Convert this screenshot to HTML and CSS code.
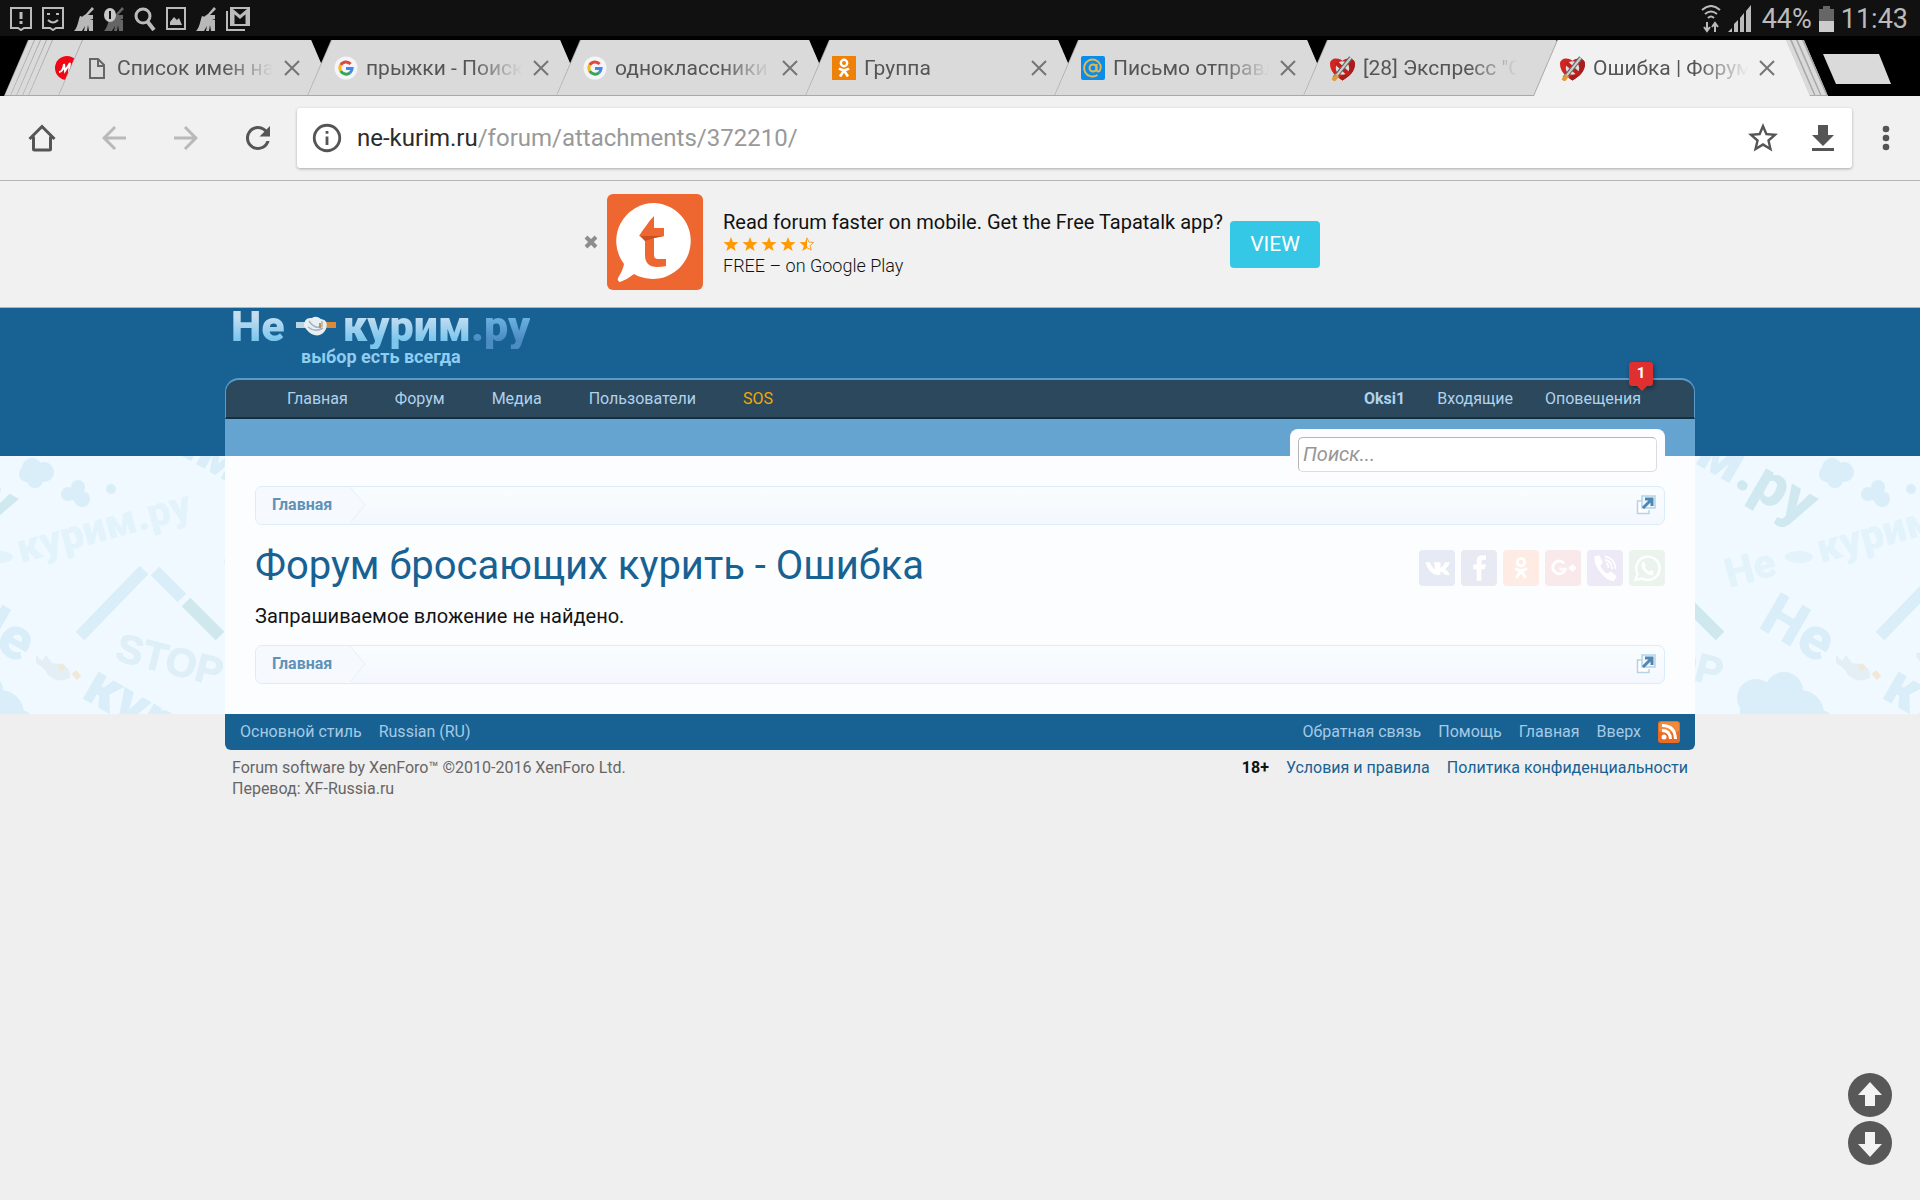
FILE: index.html
```html
<!DOCTYPE html>
<html lang="ru">
<head>
<meta charset="utf-8">
<meta name="viewport" content="width=device-width, initial-scale=1">
<title>Ошибка | Форум бросающих курить</title>
<link rel="stylesheet" href="styles.css">
</head>
<body>
<svg class="sprite" aria-hidden="true">
  <symbol id="i-close" viewBox="0 0 16 16"><path d="M1 1l14 14M15 1L1 15" fill="none" stroke="currentColor" stroke-width="2"/></symbol>
  <symbol id="i-google" viewBox="0 0 24 24"><circle cx="12" cy="12" r="11.5" fill="#f4f5f8"/><g fill="none" stroke-width="3"><path d="M16.6 8A6.1 6.1 0 0 0 6.7 9" stroke="#e0483b"/><path d="M6.7 9a6.1 6.1 0 0 0 0 6" stroke="#f5bb1b"/><path d="M6.7 15a6.1 6.1 0 0 0 9.4 1.6" stroke="#36a556"/><path d="M16.1 16.600a6.100 6.100 0 0 0 2-4.100H12" stroke="#4684ef"/></g></symbol>
  <symbol id="i-heart" viewBox="0 0 24 24"><path d="M12 24C5 20 0 15 0 8c0-5 7-7 12-3 5-4 12-2 12 3 0 7-5 12-12 16z" fill="#d32424"/><path d="M12 24c7-4 12-9 12-16 0-2-1-3.500-2.500-4.500L9 22z" fill="#a91d1d"/><circle cx="12" cy="12" r="6.500" fill="#e4dcdc"/><path d="M6 7l12 11" stroke="#c02020" stroke-width="4"/><path d="M4 22L20 2" stroke="#666" stroke-width="4"/><path d="M5 21L20 2" stroke="#cfcfcf" stroke-width="2"/><path d="M3 24l4-5" stroke="#e59a35" stroke-width="4"/></symbol>
  <symbol id="i-broom" viewBox="0 0 20 24"><path d="M18 0l2 2-6 6h5v4H7l2-3 3-2z" fill="#b8b8b8"/><path d="M6 9l13 4v11h-4l-1-6-1 6h-3l1-5-3 5H0c4-4 4-10 6-15z" fill="#b8b8b8"/></symbol>
  <symbol id="i-ok" viewBox="0 0 24 24"><circle cx="12" cy="7" r="3.200" fill="none" stroke="currentColor" stroke-width="2.400"/><path d="M7 12.500q5 3.500 10 0M12 14.500l-4 6M12 14.500l4 6" fill="none" stroke="currentColor" stroke-width="2.600"/></symbol>
  <symbol id="i-star" viewBox="0 0 18 18"><path d="M9 1l2.100 5.800 6.400.2-5 3.900L14.200 17 9 13.500 3.800 17l1.700-6.100L.5 7l6.400-.2z" fill="#f90"/></symbol>
  <symbol id="i-toggle" viewBox="0 0 20 20"><path d="M6 6H1.500v12.500H13V15" fill="#fff" stroke="#b5d3e6" stroke-width="1.500"/><path d="M6 1h13v12H6z" fill="#eef7ff" stroke="#b5d3e6" stroke-width="1.500"/><path d="M7 13l8-8M9 4h7v7" fill="none" stroke="#4f87b2" stroke-width="3"/></symbol>
</svg>

<div class="statusbar">
  <div class="status-icons">
    <svg width="22" height="24" viewBox="0 0 22 24"><path d="M1 1h20v20h-7l-3 2-3-2H1z" fill="none" stroke="#bbb" stroke-width="2"/><path d="M11 5v7M11 14v3" stroke="#bbb" stroke-width="3"/></svg>
    <svg width="22" height="24" viewBox="0 0 22 24"><path d="M1 1h20v20h-7l-3 2-3-2H1z" fill="none" stroke="#bbb" stroke-width="2"/><path d="M5 7h3M14 7h3M6 13q5 5 10 0" fill="none" stroke="#bbb" stroke-width="2"/></svg>
    <svg width="20" height="24"><use href="#i-broom"/></svg>
    <svg width="20" height="24" viewBox="0 0 20 24"><g opacity=".5"><use href="#i-broom" width="20" height="24"/></g><ellipse cx="6" cy="8" rx="6" ry="7" fill="#c8c8c8"/><path d="M6 4v8" stroke="#111" stroke-width="2"/></svg>
    <svg width="22" height="24" viewBox="0 0 22 24"><circle cx="9" cy="9" r="7" fill="none" stroke="#bbb" stroke-width="3"/><path d="M13 14l7 9" stroke="#bbb" stroke-width="4"/></svg>
    <svg width="20" height="24" viewBox="0 0 20 24"><path d="M1 1h18v21H1z" fill="none" stroke="#bbb" stroke-width="2"/><path d="M4 18v-3l4-5 3 3 2-2 3 7z" fill="#bbb"/></svg>
    <svg width="20" height="24"><use href="#i-broom"/></svg>
    <svg width="24" height="24" viewBox="0 0 24 24"><path d="M5 1h18v17H5zM1 4v19h18" fill="none" stroke="#bbb" stroke-width="2"/><path d="M7 18V4l7 6 7-6v14" fill="none" stroke="#bbb" stroke-width="3"/></svg>
  </div>
  <div class="status-right">
    <svg width="20" height="28" viewBox="0 0 20 28"><path d="M1 5q9-8 18 0M4 9q6-5 12 0M7 13q3-3 6 0" fill="none" stroke="#bbb" stroke-width="2"/><path d="M6 17v8M3 22l3 4 3-4M14 27v-8M11 22l3-4 3 4" fill="none" stroke="#bbb" stroke-width="2"/></svg>
    <svg width="23" height="28" viewBox="0 0 23 28"><path d="M0 27l4-4v4zM6 27v-8l4-4v12zM12 27V13l4-5v19zM18 27V6l5-6v27z" fill="#bbb"/></svg>
    <span class="battery-level">44%</span>
    <svg width="15" height="28" viewBox="0 0 15 28"><path d="M0 4h4V1h7v3h4v12H0z" fill="#666"/><path d="M0 16h15v11H0z" fill="#ccc"/></svg>
    <span>11:43</span>
  </div>
</div>

<div class="tabstrip">
  <div class="tab tab-stacked"></div>
  <div class="tab tab-stacked"></div>
  <div class="tab tab-stacked"></div>
  <div class="tab tab-stacked"></div>
  <div class="tab tab-peek"><svg width="24" height="24" viewBox="0 0 24 24"><circle cx="12" cy="12" r="12" fill="#f00614"/><path d="M4 16q4 0 5-8l1 7 5-8-1 9q3 0 4-2" fill="none" stroke="#fff" stroke-width="2"/></svg></div>
  <div class="tab"><svg width="24" height="24" viewBox="0 0 24 24"><path d="M5 3h8l6 6v13H5zM13 3v7h6" fill="none" stroke="#666" stroke-width="2"/></svg><span class="tab-title">Список имен на</span><button class="tab-close" aria-label="Закрыть"><svg width="16" height="16"><use href="#i-close"/></svg></button></div>
  <div class="tab"><svg width="24" height="24"><use href="#i-google"/></svg><span class="tab-title">прыжки - Поиск</span><button class="tab-close" aria-label="Закрыть"><svg width="16" height="16"><use href="#i-close"/></svg></button></div>
  <div class="tab"><svg width="24" height="24"><use href="#i-google"/></svg><span class="tab-title">одноклассники</span><button class="tab-close" aria-label="Закрыть"><svg width="16" height="16"><use href="#i-close"/></svg></button></div>
  <div class="tab"><svg class="fav-ok" width="24" height="24"><use href="#i-ok"/></svg><span class="tab-title">Группа</span><button class="tab-close" aria-label="Закрыть"><svg width="16" height="16"><use href="#i-close"/></svg></button></div>
  <div class="tab"><svg width="24" height="24" viewBox="0 0 24 24"><rect width="24" height="24" rx="2" fill="#0b8ce8"/><circle cx="12" cy="12" r="3.500" fill="none" stroke="#e5b84f" stroke-width="2"/><path d="M15.500 8v6q1 2.500 3 1 2-3 1-6a8.500 8.500 0 1 0-3 10" fill="none" stroke="#e5b84f" stroke-width="2"/></svg><span class="tab-title">Письмо отправл</span><button class="tab-close" aria-label="Закрыть"><svg width="16" height="16"><use href="#i-close"/></svg></button></div>
  <div class="tab tab-covered"><svg width="25" height="26"><use href="#i-heart"/></svg><span class="tab-title">[28] Экспресс "С</span></div>
  <div class="tab tab-active"><svg width="25" height="26"><use href="#i-heart"/></svg><span class="tab-title">Ошибка | Форум</span><button class="tab-close" aria-label="Закрыть"><svg width="16" height="16"><use href="#i-close"/></svg></button></div>
  <div class="edge edge-a"></div>
  <div class="edge edge-b"></div>
  <div class="edge edge-c"></div>
  <button class="new-tab" aria-label="Новая вкладка"></button>
</div>

<div class="toolbar">
  <button class="tool" aria-label="Домой"><svg width="36" height="36" viewBox="0 0 36 36"><path d="M5.500 19L18 6.500 30.500 19M9.500 16.500V29q0 1 1 1h15q1 0 1-1V16.500" fill="none" stroke="#555" stroke-width="3"/></svg></button>
  <button class="tool tool-off" aria-label="Назад"><svg width="36" height="36" viewBox="0 0 24 24"><path d="M20 11H7.800l5.600-5.600L12 4l-8 8 8 8 1.400-1.400L7.800 13H20z" fill="currentColor"/></svg></button>
  <button class="tool tool-off" aria-label="Вперед"><svg width="36" height="36" viewBox="0 0 24 24"><path d="M12 4l-1.400 1.400 5.600 5.600H4v2h12.200l-5.600 5.600L12 20l8-8z" fill="currentColor"/></svg></button>
  <button class="tool" aria-label="Обновить"><svg width="36" height="36" viewBox="0 0 24 24"><path d="M17.650 6.350A8 8 0 1 0 19.730 14h-2.080A6 6 0 1 1 12 6c1.660 0 3.140.69 4.220 1.780L13 11h7V4z" fill="currentColor"/></svg></button>
  <div class="omnibox">
    <svg width="34" height="34" viewBox="0 0 24 24"><path d="M11 17h2v-6h-2v6zm1-15a10 10 0 1 0 0 20 10 10 0 0 0 0-20zm0 18a8 8 0 1 1 0-16 8 8 0 0 1 0 16zM11 9h2V7h-2v2z" fill="#555"/></svg>
    <p class="url"><span class="host">ne-kurim.ru</span>/forum/attachments/372210/</p>
    <button class="tool" aria-label="Добавить в закладки"><svg width="36" height="36" viewBox="0 0 24 24"><path d="M22 9.240l-7.190-.62L12 2 9.190 8.630 2 9.240l5.460 4.730L5.820 21 12 17.270 18.180 21l-1.630-7.030L22 9.240zM12 15.400l-3.760 2.270 1-4.280-3.320-2.880 4.380-.38L12 6.100l1.710 4.040 4.380.38-3.320 2.880 1 4.280L12 15.400z" fill="currentColor"/></svg></button>
    <button class="tool" aria-label="Скачать"><svg width="36" height="36" viewBox="0 0 36 36"><path d="M13 5h10v10h6L18 26 7 15h6zM7 28h22v3H7z" fill="currentColor"/></svg></button>
  </div>
  <button class="menu" aria-label="Меню"><svg width="8" height="28" viewBox="0 0 8 28"><g fill="#555"><circle cx="4" cy="5" r="3.300"/><circle cx="4" cy="14" r="3.300"/><circle cx="4" cy="23" r="3.300"/></g></svg></button>
</div>

<div class="promo">
  <button class="promo-close" aria-label="Закрыть"><svg width="14" height="14" viewBox="0 0 14 14"><path d="M2 2l10 10M12 2L2 12" stroke="#8d8d8d" stroke-width="4"/></svg></button>
  <svg class="promo-logo" width="96" height="96" viewBox="0 0 96 96"><rect width="96" height="96" rx="6" fill="#ee6730"/><path d="M48 9a38 38 0 1 1-21 71q-6 5-14 8-3-1-2-4 5-8 6-14A38 38 0 0 1 48 9z" fill="#fff"/><path d="M47 22v12h10v8l-10 2v17q0 4 4 4h8v7q-4 1-9 1-12 0-12-12V43l-6-1q3-5 7-10 4-6 8-10z" fill="#ee6730"/><path d="M33 42h24l-10 2-9 3z" fill="#c94f1e"/></svg>
  <div class="promo-text">
    <p class="promo-title">Read forum faster on mobile. Get the Free Tapatalk app?</p>
    <div class="stars" role="img" aria-label="4.5"><svg width="16" height="16"><use href="#i-star"/></svg><svg width="16" height="16"><use href="#i-star"/></svg><svg width="16" height="16"><use href="#i-star"/></svg><svg width="16" height="16"><use href="#i-star"/></svg><svg width="16" height="16" viewBox="0 0 18 18"><path d="M9 1v12.500L3.800 17l1.700-6.100L.5 7l6.400-.2z" fill="#f90"/><path d="M9 2l2.100 4.800 5.400.4-4 3.700 1.200 5L9 13" fill="none" stroke="#f90"/></svg></div>
    <p class="promo-note">FREE – on Google Play</p>
  </div>
  <button class="promo-view">VIEW</button>
</div>

<header class="header">
  <div class="wrap">
    <a class="logo" href="#">
      <span class="logo-row"><span class="logo-main">Не</span><svg width="40" height="24" viewBox="0 0 40 24"><path d="M0 11h12" stroke="#bcd5e3" stroke-width="6"/><path d="M28 11h12" stroke="#d98a3c" stroke-width="6"/><path d="M8 12q0-9 8-8 4-3 9 1 8 1 5 10-4 8-12 6-6-2-10-9z" fill="#e9eef0"/><path d="M13 7q6 9 13 5V7M12 13q7 6 15 1" fill="none" stroke="#9fb6c2" stroke-width="1.500"/><path d="M24 9v5" stroke="#d98a3c" stroke-width="2"/></svg><span class="logo-main">курим</span><span class="logo-zone">.ру</span></span>
      <span class="logo-sub">выбор есть всегда</span>
    </a>
    <nav class="nav">
      <a href="#">Главная</a><a href="#">Форум</a><a href="#">Медиа</a><a href="#">Пользователи</a><a class="sos" href="#">SOS</a>
      <div class="nav-user">
        <a class="user" href="#">Oksi1</a><a href="#">Входящие</a><a class="alerts" href="#">Оповещения<span class="badge">1</span></a>
      </div>
    </nav>
    <div class="subnav">
      <form class="search"><input type="text" placeholder="Поиск..." aria-label="Поиск"></form>
    </div>
  </div>
</header>

<main class="main">
  <svg class="wallpaper" aria-hidden="true">
    <defs>
      <g id="slogan"><g transform="translate(257 171) rotate(30)"><text class="wp-big">Не</text></g><g transform="translate(380 241) rotate(30)"><text class="wp-big">курим<tspan fill="#d0e8f0">.ру</tspan></text></g><path d="M336 199l6 6 4-6 6 8 8 1q12 4 10 14-12 6-22-3-4-8-12-12z" fill="#e3eff4"/><path d="M360 209l4 4M374 216l5 6" stroke="#f3e8d8" stroke-width="6"/></g>
      <g id="slogan-small" fill="#e3f3fb"><text class="wp-small" transform="translate(229 132) rotate(-15)">Не</text><text class="wp-small" transform="translate(321 107) rotate(-15)">курим.ру</text><ellipse cx="299" cy="101" rx="14" ry="6"/></g>
      <g id="cloud"><circle cx="256" cy="242" r="19"/><circle cx="284" cy="235" r="19"/><circle cx="300" cy="258" r="24"/><circle cx="320" cy="268" r="14"/><rect x="240" y="244" width="70" height="30"/></g>
      <pattern id="tile" width="300" height="300" patternUnits="userSpaceOnUse">
        <rect width="300" height="300" fill="#f0f9ff"/>
        <g fill="#d9eef8"><use href="#cloud"/><use href="#cloud" x="-300"/>
        <circle cx="32" cy="12" r="10"/><circle cx="44" cy="16" r="10"/><circle cx="27" cy="18" r="8"/><circle cx="35" cy="24" r="8"/>
        <circle cx="78" cy="31" r="7"/><circle cx="68" cy="38" r="7"/><circle cx="82" cy="43" r="8"/><circle cx="76" cy="38" r="7"/><circle cx="111" cy="33" r="5"/></g>
        <use href="#slogan-small"/><use href="#slogan-small" x="-300"/>
        <g stroke-width="12"><path d="M80 180l64-66M155 115l27 27" stroke="#d9eef8"/><path d="M186 146l34 34" stroke="#cfe8ee"/></g>
        <text class="wp-stop" transform="translate(114 204) rotate(14)">STOP</text>
        <g fill="#d9eef8"><use href="#slogan"/><use href="#slogan" x="-300"/><use href="#slogan" x="-300" y="-300"/><use href="#slogan" x="-600" y="-300"/></g>
      </pattern>
    </defs>
    <rect width="100%" height="100%" fill="url(#tile)"/>
  </svg>
  <div class="wrap content">
    <nav class="crumbs"><a href="#">Главная</a><svg class="chevron" width="16" height="36" viewBox="0 0 16 36"><path d="M0 0l15 18L0 36z" fill="#f6f9fe"/><path d="M0 0l15 18L0 36" fill="none" stroke="#e3f0fa"/></svg><button class="crumb-toggle" aria-label="Открыть меню"><svg width="20" height="20"><use href="#i-toggle"/></svg></button></nav>
    <div class="title-row">
      <h1>Форум бросающих курить - Ошибка</h1>
      <div class="share">
        <button class="vk" aria-label="ВКонтакте"><svg width="28" height="28" viewBox="0 0 24 24"><path d="M2 7h4q2 5 4 6V9L9 7h6v5q2-1 4-5h4q-1 4-4 6 3 2 4 5h-4q-2-3-4-3v3h-3Q5 17 2 7z" fill="#fff"/></svg></button>
        <button class="fb" aria-label="Facebook"><svg width="28" height="28" viewBox="0 0 24 24"><path d="M10 23V13H7V9h3V6q0-5 5-5h3v4h-2q-2 0-2 2v2h4l-1 4h-3v10z" fill="#fff"/></svg></button>
        <button class="ok" aria-label="Одноклассники"><svg width="28" height="28"><use href="#i-ok"/></svg></button>
        <button class="gp" aria-label="Google+"><svg width="28" height="28" viewBox="0 0 24 24"><path d="M13 8a5.500 5.500 0 1 0 1 5H9M17 12h6M20 9v6" fill="none" stroke="#fff" stroke-width="2.400"/></svg></button>
        <button class="vb" aria-label="Viber"><svg width="28" height="28" viewBox="0 0 24 24"><path d="M3 2l4-1 3 6-2 3q2 5 6 7l3-2 5 4-2 4q-5 1-11-6Q2 9 3 2z" fill="#fff"/><path d="M12 2q9 2 9 11M12 5q6 1 6 8M13 8q2 1 2 4" fill="none" stroke="#fff" stroke-width="1.500"/></svg></button>
        <button class="wa" aria-label="WhatsApp"><svg width="28" height="28" viewBox="0 0 24 24"><path d="M2 22l2-5a10 10 0 1 1 4 4z" fill="none" stroke="#fff" stroke-width="2"/><path d="M8 7l2 0 1 3-1 1q1 3 4 4l1-1 3 1-1 3q-3 1-7-3-4-4-2-8z" fill="#fff"/></svg></button>
      </div>
    </div>
    <p class="message">Запрашиваемое вложение не найдено.</p>
    <nav class="crumbs"><a href="#">Главная</a><svg class="chevron" width="16" height="36" viewBox="0 0 16 36"><path d="M0 0l15 18L0 36z" fill="#f6f9fe"/><path d="M0 0l15 18L0 36" fill="none" stroke="#e3f0fa"/></svg><button class="crumb-toggle" aria-label="Открыть меню"><svg width="20" height="20"><use href="#i-toggle"/></svg></button></nav>
  </div>
</main>

<footer class="wrap">
  <div class="footer-bar">
    <div class="footer-links"><a href="#">Основной стиль</a><a href="#">Russian (RU)</a></div>
    <div class="footer-links"><a href="#">Обратная связь</a><a href="#">Помощь</a><a href="#">Главная</a><a href="#">Вверх</a>
    <a class="rss" href="#" aria-label="RSS"><svg width="22" height="22" viewBox="0 0 22 22"><rect width="22" height="22" rx="3" fill="#ea6c24"/><rect x="1" y="1" width="20" height="10" rx="2" fill="#f08a3c"/><circle cx="6" cy="16" r="2.500" fill="#fff"/><path d="M4 9.500q8 0 8.500 8.500M4 4.500q13 0 13.500 13.500" fill="none" stroke="#fff" stroke-width="3"/></svg></a></div>
  </div>
  <div class="legal">
    <p>Forum software by XenForo™ ©2010-2016 XenForo Ltd.<br>Перевод: XF-Russia.ru</p>
    <div class="legal-links"><b>18+</b><a href="#">Условия и правила</a><a href="#">Политика конфиденциальности</a></div>
  </div>
</footer>

<div class="scrollers">
  <button aria-label="Вверх"><svg width="44" height="44" viewBox="0 0 44 44"><circle cx="22" cy="22" r="22" fill="#585858"/><path d="M22 9l12 13h-7v11H17V22h-7z" fill="#f3f3f3"/></svg></button>
  <button aria-label="Вниз"><svg width="44" height="44" viewBox="0 0 44 44"><circle cx="22" cy="22" r="22" fill="#585858"/><path d="M22 36L10 23h7V11h10v12h7z" fill="#f3f3f3"/></svg></button>
</div>
</body>
</html>
```
FILE: styles.css
```css
* { box-sizing: border-box; }
body {
  margin: 0;
  background: #efefef;
  color: #141414;
  font: 16px/20px Roboto, "Liberation Sans", sans-serif;
}
p, h1 { margin: 0; }
a { color: inherit; text-decoration: none; }
svg { display: block; flex: none; }
button { padding: 0; border: 0; background: none; color: inherit; font: inherit; }
.sprite { position: absolute; width: 0; height: 0; }

.statusbar {
  display: flex;
  justify-content: space-between;
  align-items: center;
  height: 36px;
  padding: 2px 12px 0 10px;
  background: #111;
  color: #bbb;
  font-size: 27px;
}
.status-icons { display: flex; gap: 10px; }
.status-right { display: flex; align-items: center; gap: 7px; }
.battery-level { padding-left: 4px; }

.tabstrip {
  display: flex;
  isolation: isolate;
  height: 60px;
  padding: 4px 0 0 4px;
  background: #000;
}
.tab {
  position: relative;
  display: flex;
  flex: 0 1 277px;
  align-items: center;
  gap: 8px;
  min-width: 0;
  height: 56px;
  margin-right: -28px;
  padding: 0 35px 0 27px;
  background: #a9a9a9;
  clip-path: polygon(24px 0, calc(100% - 24px) 0, 100% 100%, 0 100%);
  color: #555;
  font-size: 21px;
}
.tab::before {
  content: "";
  position: absolute;
  inset: 0 0 1px 0;
  background: #dadada;
  clip-path: polygon(25px 0, 100% 0, 100% 100%, 1px 100%);
}
.tab > * { position: relative; }
.tab-stacked { flex: 0 0 60px; margin-right: -54px; padding: 0; }
.tab-peek { flex: 0 0 90px; margin-right: -60px; padding-right: 0; }
.tab-covered { margin-right: -47px; }
.tab-active { z-index: 2; margin-right: 0; }
.tab-active::before { bottom: 0; background: #f1f1f1; }
.tab-title {
  flex: 1;
  overflow: hidden;
  white-space: nowrap;
  line-height: 28px;
  mask-image: linear-gradient(to right, #000 calc(100% - 50px), transparent);
}
.tab-covered .tab-title { margin-right: 27px; }
.tab-close { margin-left: 3px; color: #757575; }
.fav-ok { background: #ee8208; color: #fff; }
.edge {
  position: relative;
  flex: none;
  width: 40px;
  height: 56px;
  margin-left: -34px;
  background: #dadada;
  border-bottom: 1px solid #a9a9a9;
  clip-path: polygon(0 0, 16px 0, 100% 100%, 0 100%);
}
.edge::after {
  content: "";
  position: absolute;
  inset: 0;
  background: #a9a9a9;
  clip-path: polygon(14px 0, 16px 0, 100% 100%, calc(100% - 2px) 100%);
}
.edge-a { z-index: 1; }
.edge-b { z-index: 0; }
.edge-c { z-index: -1; }
.new-tab {
  width: 68px;
  height: 30px;
  margin: 14px 0 0 -5px;
  background: #dadada;
  clip-path: polygon(0 0, 56px 0, 100% 100%, 13px 100%);
}

.toolbar {
  display: flex;
  align-items: center;
  gap: 36px;
  height: 85px;
  padding: 0 30px 0 24px;
  border-bottom: 1px solid #b5b5b5;
  background: #f1f1f1;
}
.tool { color: #555; }
.tool-off { color: #b9b9b9; }
.omnibox {
  display: flex;
  flex: 1;
  align-items: center;
  gap: 24px;
  height: 60px;
  margin-left: -15px;
  margin-right: -6px;
  padding: 0 11px 0 13px;
  border-radius: 3px;
  background: #fff;
  box-shadow: 0 1px 3px rgba(0, 0, 0, .3);
}
.url { flex: 1; margin-left: -11px; color: #999; font-size: 24px; line-height: 32px; }
.host { color: #2b2b2b; }

.promo {
  display: flex;
  justify-content: center;
  align-items: center;
  height: 126px;
  padding: 0 16px 4px 0;
  background: #f1f1f1;
  color: #111;
}
.promo-logo { margin: 0 20px 0 9px; }
.promo-text { display: grid; gap: 2px; margin-right: 7px; padding-top: 4px; }
.promo-title { font-size: 20px; line-height: 24px; }
.stars { display: flex; gap: 3px; }
.promo-note { font-size: 18px; line-height: 24px; font-weight: 300; }
.promo-view {
  width: 90px;
  height: 47px;
  margin-top: 4px;
  border-radius: 4px;
  background: #34c8e6;
  color: #fff;
  font-size: 21px;
}

.wrap { max-width: 1470px; margin: 0 auto; }
.header { background: #186193; border-top: 1px solid #8fbddb; }
.logo { display: flow-root; height: 70px; padding-left: 6px; }
.logo-row { display: flex; align-items: center; height: 46px; margin-top: -5px; font-size: 43px; font-weight: 900; }
.logo-row svg { margin: 0 7px 0 11px; }
.logo-main, .logo-zone {
  line-height: 46px;
  background: linear-gradient(#c4def0 30%, #7cc6ee 80%);
  background-clip: text;
  color: transparent;
}
.logo-zone { background-image: linear-gradient(#6bb4e2 30%, #4b8cc4 80%); }
.logo-sub { display: block; padding-left: 70px; color: #8fcdf0; font-size: 18px; line-height: 16px; font-weight: 700; }
.nav {
  display: flex;
  align-items: center;
  gap: 47px;
  height: 41px;
  padding: 0 53px 0 61px;
  border: 2px solid #5b9bcb;
  border-color: #5b9bcb #5b9bcb #12303f;
  border-width: 2px 1px 2px 1px;
  border-radius: 14px 14px 0 0;
  background: #2b485c;
  color: #b0d2ec;
}
.nav .sos { color: #f5a800; }
.nav-user { display: flex; gap: 32px; margin-left: auto; }
.user { font-weight: 700; }
.alerts { position: relative; }
.badge {
  position: absolute;
  right: -12px;
  bottom: 23px;
  width: 24px;
  height: 24px;
  border-radius: 3px;
  background: #e02f2f;
  box-shadow: 1px 2px 4px rgba(0, 0, 0, .4);
  color: #fff;
  font-size: 15px;
  line-height: 22px;
  font-weight: 700;
  text-align: center;
}
.badge::after {
  content: "";
  position: absolute;
  left: 8px;
  top: 24px;
  border: 5px solid transparent;
  border-top-color: #e02f2f;
  border-bottom: 0;
}
.subnav { position: relative; height: 37px; background: #65a3d1; }
.search {
  position: absolute;
  z-index: 2;
  right: 30px;
  top: 10px;
  width: 375px;
  padding: 8px;
  border-radius: 8px 8px 0 0;
  background: #fdfdff;
}
.search input {
  display: block;
  width: 100%;
  height: 35px;
  padding: 0 4px 2px;
  border: 1px solid #dcdcdc;
  border-color: #b5b5b5 #dcdcdc #dcdcdc #b5b5b5;
  border-radius: 5px;
  background: #fff;
  font: italic 20px/24px Roboto, "Liberation Sans", sans-serif;
}
.search input::placeholder { color: #969696; opacity: 1; }

.main { position: relative; }
.wallpaper { position: absolute; inset: 0; width: 100%; height: 100%; }
.wp-big { font: 900 59px Roboto, sans-serif; }
.wp-small { font: 900 41px Roboto, sans-serif; }
.wp-stop { font: 700 40px "Liberation Sans", sans-serif; fill: #deeff8; stroke: #deeff8; stroke-width: 1px; }
.content { position: relative; padding: 30px; background: #fcfdff; }
.crumbs {
  display: flex;
  height: 39px;
  overflow: hidden;
  border: 1px solid #dcecf8;
  border-radius: 7px;
  background: linear-gradient(#fafdfe, #f4f8fe);
}
.crumbs a {
  padding: 0 18px 0 16px;
  background: #f6f9fe;
  color: #5f92b8;
  line-height: 36px;
  font-weight: 700;
}
.crumb-toggle { margin: 0 8px 2px auto; }
.title-row { display: flex; justify-content: space-between; align-items: center; height: 79px; }
h1 { padding-top: 2px; color: #186193; font-size: 40px; line-height: 48px; font-weight: 400; }
.share { display: flex; gap: 6px; padding-top: 6px; }
.share button { display: grid; place-items: center; width: 36px; height: 36px; border-radius: 4px; color: #fff; }
.vk { background: #e6eaf4; }
.fb { background: #e8eaf3; }
.ok { background: #feebe4; }
.gp { background: #fae9eb; }
.vb { background: #ede9f6; }
.wa { background: #eaf4ec; }
.message { padding-bottom: 17px; font-size: 20px; line-height: 24px; }

.footer-bar {
  display: flex;
  align-items: center;
  justify-content: space-between;
  height: 36px;
  padding: 0 15px;
  border-radius: 0 0 6px 6px;
  background: #186193;
  color: #a5cae4;
}
.footer-links { display: flex; align-items: center; gap: 17px; }
.legal { display: flex; justify-content: space-between; padding: 7px; color: #666; line-height: 21px; }
.legal-links { display: flex; gap: 17px; color: #186193; }
.legal-links b { color: #111; }

.scrollers { position: fixed; right: 28px; bottom: 35px; display: grid; gap: 4px; }
```
